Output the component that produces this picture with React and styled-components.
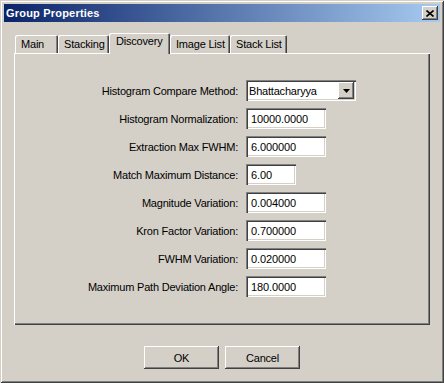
import React from "react";
import styled, { createGlobalStyle } from "styled-components";

const FACE = "#d4d0c8";

const GlobalStyle = createGlobalStyle`
  html, body {
    margin: 0;
    padding: 0;
    background: ${FACE};
  }
  * {
    box-sizing: border-box;
  }
`;

const Window = styled.div`
  width: 444px;
  height: 383px;
  padding: 4px;
  display: flex;
  flex-direction: column;
  background: ${FACE};
  font-family: "Liberation Sans", Arial, sans-serif;
  font-size: 11px;
  letter-spacing: -0.2px;
  color: #000;
  box-shadow: inset 1px 1px 0 ${FACE}, inset -1px -1px 0 #404040,
    inset 2px 2px 0 #fff, inset -2px -2px 0 #808080;
`;

const TitleBar = styled.div`
  height: 18px;
  display: flex;
  align-items: center;
  justify-content: space-between;
  padding: 0 2px 0 2px;
  background: linear-gradient(to right, #0a246a, #a6caf0);
`;

const TitleText = styled.span`
  color: #fff;
  font-weight: bold;
  font-size: 11px;
  letter-spacing: 0.2px;
`;

const CloseButton = styled.div`
  width: 16px;
  height: 14px;
  display: flex;
  align-items: center;
  justify-content: center;
  background: ${FACE};
  box-shadow: inset -1px -1px 0 #404040, inset 1px 1px 0 #fff,
    inset -2px -2px 0 #808080;
`;

const Content = styled.div`
  display: flex;
  flex-direction: column;
  padding: 11px 10px 0 10px;
`;

const TabStrip = styled.div`
  height: 20px;
  display: flex;
  align-items: flex-end;
  padding-left: 1px;
  position: relative;
  z-index: 1;
`;

const Tab = styled.div`
  width: ${(p) => p.w}px;
  height: ${(p) => (p.active ? 21 : 18)}px;
  margin: ${(p) => (p.active ? "0 0 -1px 0" : "0")};
  padding: ${(p) => (p.active ? "2px 0 0 7px" : "3px 0 0 6px")};
  background: ${FACE};
  border-radius: 2px 2px 0 0;
  white-space: nowrap;
  box-shadow: inset 1px 1px 0 #fff, inset -1px 0 0 #404040,
    inset -2px 0 0 #808080;
`;

const Panel = styled.div`
  height: 272px;
  padding-top: 27px;
  background: ${FACE};
  box-shadow: inset 1px 1px 0 #fff, inset -1px -1px 0 #404040,
    inset -2px -2px 0 #808080;
`;

const Form = styled.div`
  display: grid;
  grid-template-columns: 224px 1fr;
  grid-auto-rows: 21px;
  column-gap: 8px;
  row-gap: 7px;
`;

const Label = styled.span`
  align-self: center;
  text-align: right;
  white-space: nowrap;
`;

const Field = styled.input`
  width: ${(p) => p.w}px;
  height: 21px;
  border: none;
  outline: none;
  margin: 0;
  padding: 0 0 0 5px;
  background: #fff;
  font-family: "Liberation Sans", Arial, sans-serif;
  font-size: 11px;
  letter-spacing: -0.1px;
  color: #000;
  box-shadow: inset 1px 1px 0 #808080, inset 2px 2px 0 #404040,
    inset -1px -1px 0 #fff, inset -2px -2px 0 ${FACE};
`;

const Combo = styled.div`
  width: 110px;
  height: 21px;
  display: flex;
  align-items: center;
  justify-content: space-between;
  padding: 2px 2px 2px 3px;
  background: #fff;
  box-shadow: inset 1px 1px 0 #808080, inset 2px 2px 0 #404040,
    inset -1px -1px 0 #fff, inset -2px -2px 0 ${FACE};
`;

const ComboButton = styled.div`
  width: 16px;
  height: 17px;
  display: flex;
  align-items: center;
  justify-content: center;
  background: ${FACE};
  box-shadow: inset -1px -1px 0 #404040, inset 1px 1px 0 #fff,
    inset -2px -2px 0 #808080;
`;

const ButtonRow = styled.div`
  display: flex;
  justify-content: center;
  gap: 6px;
  margin-top: 21px;
`;

const Button = styled.div`
  width: 75px;
  height: 23px;
  display: flex;
  align-items: center;
  justify-content: center;
  background: ${FACE};
  box-shadow: inset -1px -1px 0 #404040, inset 1px 1px 0 #fff,
    inset -2px -2px 0 #808080;
`;

const tabs = [
  { name: "Main", w: 43 },
  { name: "Stacking", w: 51 },
  { name: "Discovery", w: 61, active: true },
  { name: "Image List", w: 60 },
  { name: "Stack List", w: 57 },
];

const rows = [
  { label: "Histogram Normalization:", value: "10000.0000", w: 80 },
  { label: "Extraction Max FWHM:", value: "6.000000", w: 80 },
  { label: "Match Maximum Distance:", value: "6.00", w: 50 },
  { label: "Magnitude Variation:", value: "0.004000", w: 80 },
  { label: "Kron Factor Variation:", value: "0.700000", w: 80 },
  { label: "FWHM Variation:", value: "0.020000", w: 80 },
  { label: "Maximum Path Deviation Angle:", value: "180.0000", w: 80 },
];

export default function App() {
  return (
    <>
      <GlobalStyle />
      <Window>
        <TitleBar>
          <TitleText>Group Properties</TitleText>
          <CloseButton>
            <svg width="8" height="7" viewBox="0 0 8 7">
              <path d="M0.5 0.5 L7.5 6.5 M7.5 0.5 L0.5 6.5" stroke="#000" strokeWidth="1.6" />
            </svg>
          </CloseButton>
        </TitleBar>
        <Content>
          <TabStrip>
            {tabs.map((t) => (
              <Tab key={t.name} w={t.w} active={t.active}>
                {t.name}
              </Tab>
            ))}
          </TabStrip>
          <Panel>
            <Form>
              <Label>Histogram Compare Method:</Label>
              <Combo>
                <span>Bhattacharyya</span>
                <ComboButton>
                  <svg width="7" height="4" viewBox="0 0 7 4">
                    <path d="M0 0 H7 L3.5 4 Z" fill="#000" />
                  </svg>
                </ComboButton>
              </Combo>
              {rows.map((r) => (
                <React.Fragment key={r.label}>
                  <Label>{r.label}</Label>
                  <Field w={r.w} value={r.value} readOnly />
                </React.Fragment>
              ))}
            </Form>
          </Panel>
          <ButtonRow>
            <Button>OK</Button>
            <Button>Cancel</Button>
          </ButtonRow>
        </Content>
      </Window>
    </>
  );
}
